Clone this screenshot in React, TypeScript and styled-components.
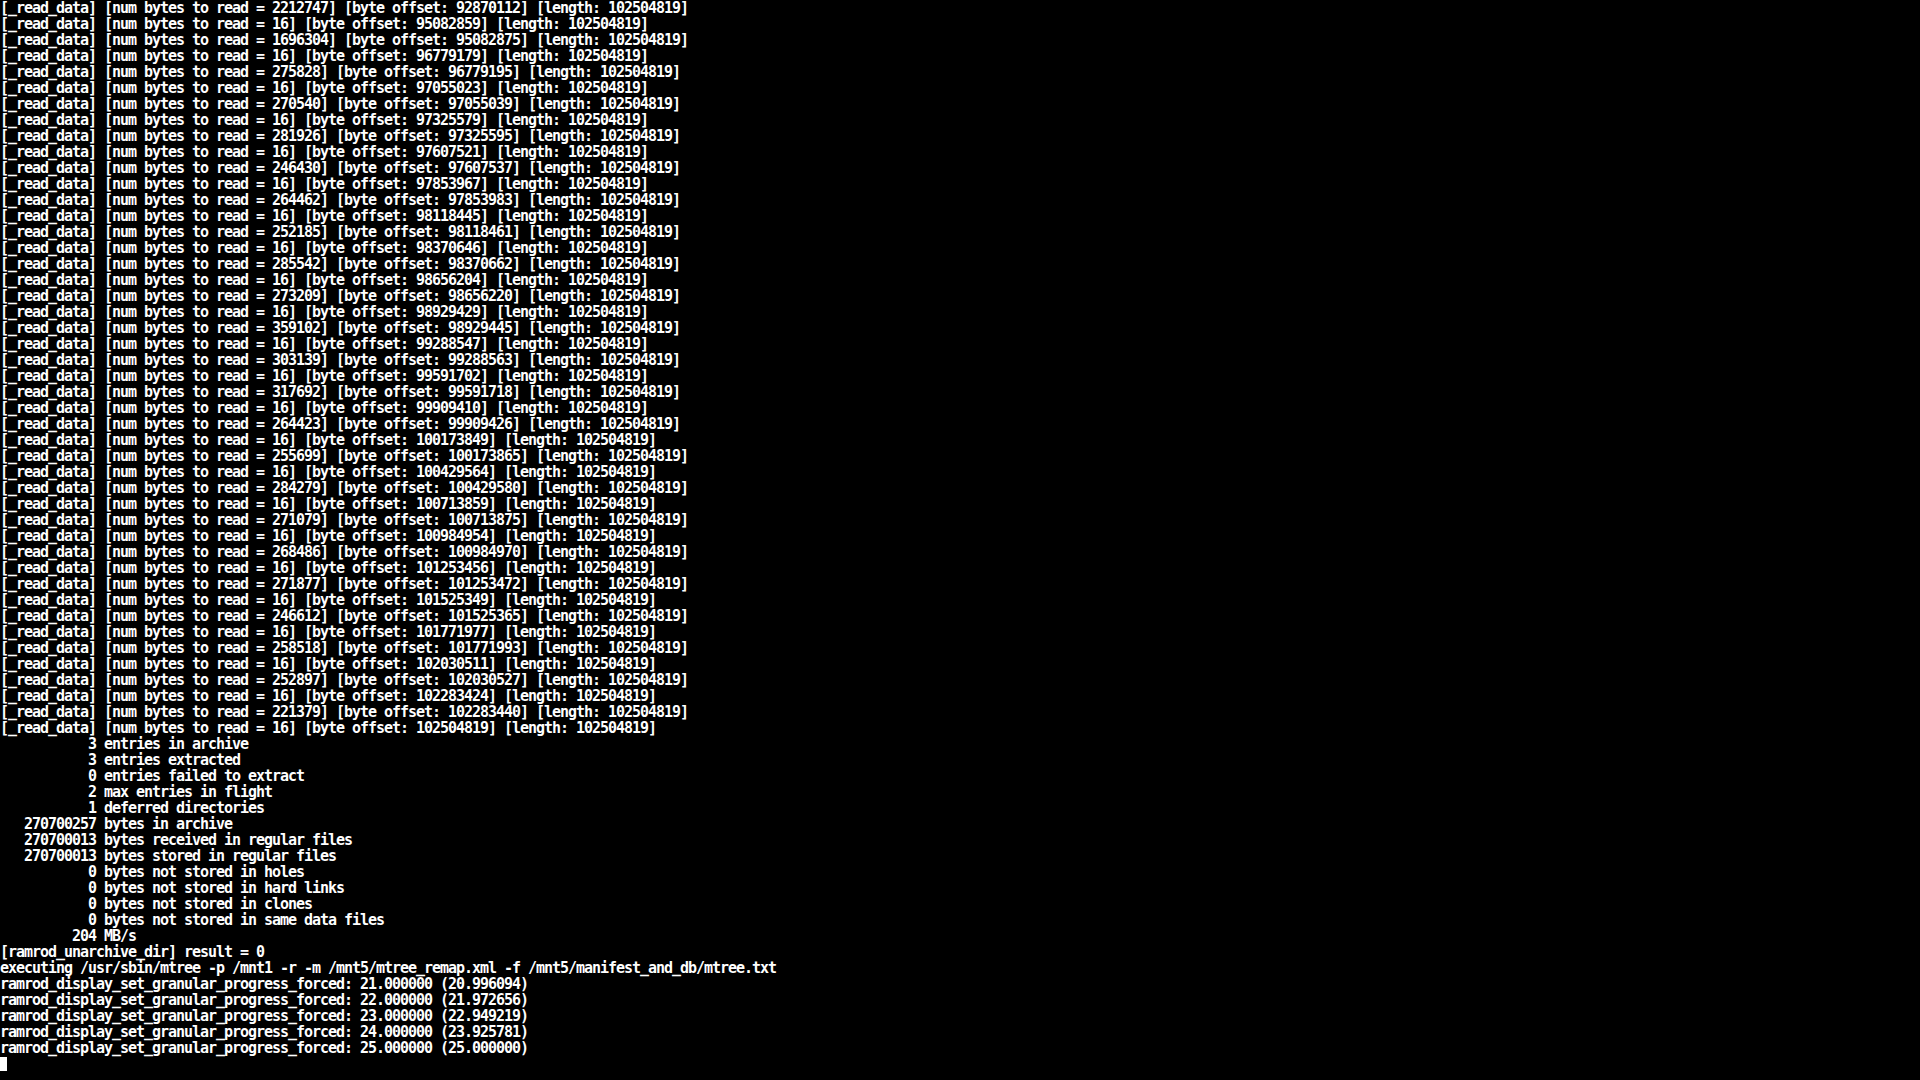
import React from "react";
import styled, { createGlobalStyle } from "styled-components";

const GlobalStyle = createGlobalStyle`
  html, body {
    margin: 0;
    padding: 0;
    background: #000;
    height: 100%;
  }
  #root {
    min-height: 100%;
  }
`;

const Screen = styled.div`
  width: 1920px;
  height: 1080px;
  background: #000;
  overflow: hidden;
  display: flex;
  flex-direction: column;
`;

const Line = styled.div`
  height: 16px;
  line-height: 16px;
  white-space: pre;
  color: #fff;
  font-family: "DejaVu Sans Mono", "Liberation Mono", monospace;
  font-size: 15px;
  font-weight: bold;
  letter-spacing: -1.03px;
`;

const Cursor = styled.span`
  display: inline-block;
  width: 7px;
  height: 14px;
  margin-top: 1px;
  background: #fff;
  vertical-align: top;
`;

const TOTAL = 102504819;
const chunks = [
  2212747, 1696304, 275828, 270540, 281926, 246430, 264462, 252185, 285542,
  273209, 359102, 303139, 317692, 264423, 255699, 284279, 271079, 268486,
  271877, 246612, 258518, 252897, 221379,
];

function buildReadLines(): string[] {
  const out: string[] = [];
  let offset = 92870112;
  chunks.forEach((n) => {
    out.push(
      `[_read_data] [num bytes to read = ${n}] [byte offset: ${offset}] [length: ${TOTAL}]`
    );
    offset += n;
    out.push(
      `[_read_data] [num bytes to read = 16] [byte offset: ${offset}] [length: ${TOTAL}]`
    );
    offset += 16;
  });
  return out;
}

const stats: [string, string][] = [
  ["3", "entries in archive"],
  ["3", "entries extracted"],
  ["0", "entries failed to extract"],
  ["2", "max entries in flight"],
  ["1", "deferred directories"],
  ["270700257", "bytes in archive"],
  ["270700013", "bytes received in regular files"],
  ["270700013", "bytes stored in regular files"],
  ["0", "bytes not stored in holes"],
  ["0", "bytes not stored in hard links"],
  ["0", "bytes not stored in clones"],
  ["0", "bytes not stored in same data files"],
  ["204", "MB/s"],
];

const tail = [
  "[ramrod_unarchive_dir] result = 0",
  "executing /usr/sbin/mtree -p /mnt1 -r -m /mnt5/mtree_remap.xml -f /mnt5/manifest_and_db/mtree.txt",
  "ramrod_display_set_granular_progress_forced: 21.000000 (20.996094)",
  "ramrod_display_set_granular_progress_forced: 22.000000 (21.972656)",
  "ramrod_display_set_granular_progress_forced: 23.000000 (22.949219)",
  "ramrod_display_set_granular_progress_forced: 24.000000 (23.925781)",
  "ramrod_display_set_granular_progress_forced: 25.000000 (25.000000)",
];

export default function App() {
  const lines = [
    ...buildReadLines(),
    ...stats.map(([n, t]) => `${n.padStart(12, " ")} ${t}`),
    ...tail,
  ];
  return (
    <>
      <GlobalStyle />
      <Screen>
        {lines.map((l, i) => (
          <Line key={i}>{l}</Line>
        ))}
        <Line>
          <Cursor />
        </Line>
      </Screen>
    </>
  );
}
